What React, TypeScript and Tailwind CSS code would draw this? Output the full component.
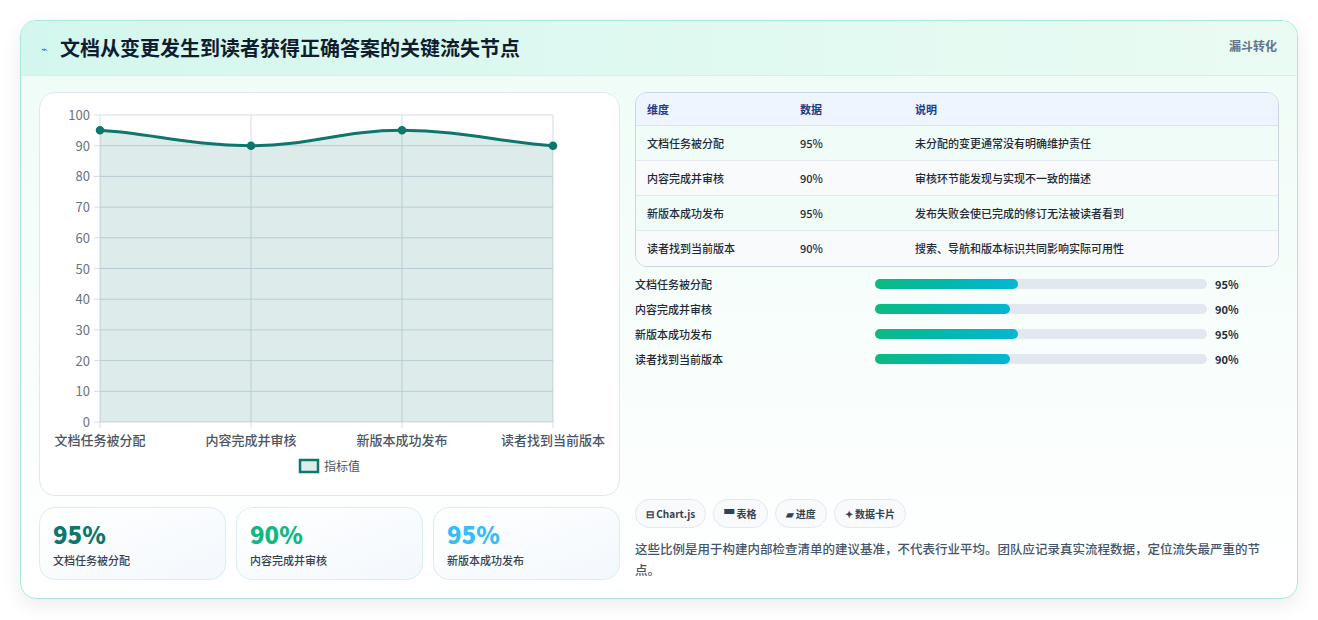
import React from 'react';

const font = { fontFamily: '"Noto Sans CJK SC", "Noto Sans", sans-serif' };

const rows = [
  { name: '文档任务被分配', v: 95, note: '未分配的变更通常没有明确维护责任', w: 143 },
  { name: '内容完成并审核', v: 90, note: '审核环节能发现与实现不一致的描述', w: 135 },
  { name: '新版本成功发布', v: 95, note: '发布失败会使已完成的修订无法被读者看到', w: 143 },
  { name: '读者找到当前版本', v: 90, note: '搜索、导航和版本标识共同影响实际可用性', w: 135 },
];

const Chart: React.FC = () => {
  const x0 = 60, x1 = 513, yTop = 22, yBot = 329;
  const xs = [0, 1, 2, 3].map((i) => x0 + (i * (x1 - x0)) / 3);
  const y = (v: number) => yBot - ((yBot - yTop) * v) / 100;
  const pts = rows.map((r, i) => [xs[i], y(r.v)]);
  const line = `M${pts[0][0]},${pts[0][1]} C${pts[0][0] + 50},${pts[0][1] + 3} ${pts[1][0] - 60},${pts[1][1]} ${pts[1][0]},${pts[1][1]} C${pts[1][0] + 60},${pts[1][1]} ${pts[2][0] - 60},${pts[2][1]} ${pts[2][0]},${pts[2][1]} C${pts[2][0] + 60},${pts[2][1]} ${pts[3][0] - 50},${pts[3][1] - 3} ${pts[3][0]},${pts[3][1]}`;
  return (
    <svg width="580" height="400" style={font}>
      {[0, 10, 20, 30, 40, 50, 60, 70, 80, 90, 100].map((t) => (
        <g key={t}>
          <line x1={x0 - 6} x2={x1} y1={y(t)} y2={y(t)} stroke="#d4dbe3" />
          <text x={x0 - 10} y={y(t) + 5} textAnchor="end" fontSize="13" fill="#6b7280">{t}</text>
        </g>
      ))}
      {xs.map((x, i) => (
        <line key={i} x1={x} x2={x} y1={yTop} y2={yBot + 6} stroke="#d4dbe3" />
      ))}
      <path d={`${line} L${x1},${yBot} L${x0},${yBot} Z`} fill="#0f766e" fillOpacity="0.14" />
      <path d={line} fill="none" stroke="#0f766e" strokeWidth="3" />
      {pts.map(([px, py], i) => (
        <circle key={i} cx={px} cy={py} r="3.5" fill="#0f766e" stroke="#0f766e" strokeWidth="1.5" />
      ))}
      {rows.map((r, i) => (
        <text key={i} x={xs[i]} y={352} textAnchor="middle" fontSize="13" fontWeight="500" fill="#4b5563">{r.name}</text>
      ))}
      <rect x="260" y="367" width="18" height="12" fill="#ddeeea" stroke="#0f766e" strokeWidth="2.5" />
      <text x="284" y="378" fontSize="12" fill="#4b5563">指标值</text>
    </svg>
  );
};

export default function App() {
  return (
    <div className="bg-white p-5 w-[1318px] h-[620px]" style={font}>
      <div className="rounded-2xl border border-[#a7e9df] overflow-hidden shadow-[0_6px_20px_rgba(0,0,0,0.08)] bg-gradient-to-b from-[#eefcf6] to-white">
        <div className="h-[55px] flex items-center justify-between px-5 bg-gradient-to-r from-[#d3f7ee] to-[#eafbf3] border-b border-[#d7efe8]">
          <div className="flex items-center gap-3">
            <span className="text-[11px] text-[#3b6ee8]">⌁</span>
            <h1 className="text-[20px] font-bold text-[#0f1d2e]">文档从变更发生到读者获得正确答案的关键流失节点</h1>
          </div>
          <span className="text-[12px] font-semibold text-[#64748b] self-start mt-4">漏斗转化</span>
        </div>
        <div className="flex gap-[15px] px-[18px] pt-[16px] pb-[18px]">
          <div className="w-[581px] flex flex-col gap-[11px]">
            <div className="h-[404px] bg-white rounded-2xl border border-[#e2e8f0]">
              <Chart />
            </div>
            <div className="flex gap-[10px]">
              {[
                ['95%', '文档任务被分配', 'text-[#0f766e]'],
                ['90%', '内容完成并审核', 'text-[#10b981]'],
                ['95%', '新版本成功发布', 'text-[#38bdf8]'],
              ].map(([v, l, c]) => (
                <div key={l} className="flex-1 h-[73px] rounded-2xl border border-[#d9eef0] bg-gradient-to-br from-white to-[#f3f8fd] px-[13px] pt-[11px]">
                  <div className={`text-[24px] font-extrabold leading-tight ${c}`}>{v}</div>
                  <div className="text-[11px] font-medium text-[#374151] mt-[3px]">{l}</div>
                </div>
              ))}
            </div>
          </div>
          <div className="flex-1 flex flex-col">
            <div className="rounded-xl border border-[#cbd5e1] overflow-hidden text-[11px] font-medium text-[#1f2937]">
              <div className="flex h-[33px] items-center bg-[#eef5fe] font-semibold text-[#1e3a8a] border-b border-[#dbe4ee]">
                <div className="w-[164px] pl-[11px]">维度</div>
                <div className="w-[115px]">数据</div>
                <div>说明</div>
              </div>
              {rows.map((r, i) => (
                <div key={r.name} className={`flex h-[35px] items-center border-b border-[#e5e9ef] last:border-b-0 ${i % 2 ? 'bg-[#f8fafc]' : 'bg-[#f0fcf7]'}`}>
                  <div className="w-[164px] pl-[11px]">{r.name}</div>
                  <div className="w-[115px]">{r.v}%</div>
                  <div>{r.note}</div>
                </div>
              ))}
            </div>
            <div className="flex flex-col gap-[11px] mt-[10px] text-[11px] font-medium text-[#1f2937]">
              {rows.map((r) => (
                <div key={r.name} className="flex items-center h-[14px]">
                  <div className="w-[240px]">{r.name}</div>
                  <div className="w-[332px] h-[10px] rounded-full bg-[#e2e8f0]">
                    <div className="h-full rounded-full bg-gradient-to-r from-[#10b981] to-[#06b6d4]" style={{ width: r.w }} />
                  </div>
                  <div className="ml-[8px] font-bold">{r.v}%</div>
                </div>
              ))}
            </div>
            <div className="flex-1" />
            <div className="flex gap-[7px] text-[10px] font-semibold text-[#334155]">
              {['⊟ Chart.js', '▀ 表格', '▰ 进度', '✦ 数据卡片'].map((t) => (
                <span key={t} className="h-[29px] px-[10px] flex items-center rounded-full border border-[#e2e8f0] bg-[#f8fafc]">{t}</span>
              ))}
            </div>
            <p className="mt-[10px] text-[12.5px] font-medium leading-[21px] text-[#475569] pr-[6px]">
              这些比例是用于构建内部检查清单的建议基准，不代表行业平均。团队应记录真实流程数据，定位流失最严重的节点。
            </p>
          </div>
        </div>
      </div>
    </div>
  );
}
